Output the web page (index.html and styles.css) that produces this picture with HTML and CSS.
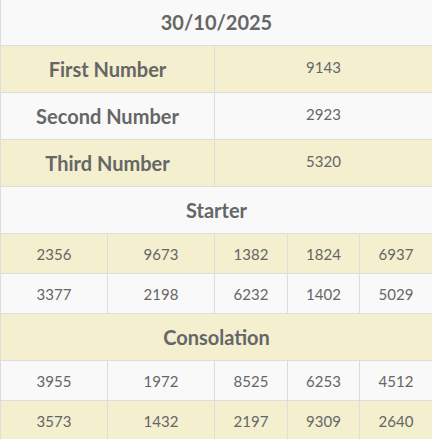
FILE: index.html
```html
<!DOCTYPE html>
<html>
<head>
<meta charset="utf-8">
<link rel="stylesheet" href="styles.css">
</head>
<body>
<div class="results">
  <div class="cell head span5 bg-grey">30/10/2025</div>

  <div class="cell label span2 bg-beige">First Number</div>
  <div class="cell prize span3 bg-beige">9143</div>

  <div class="cell label span2 bg-grey">Second Number</div>
  <div class="cell prize span3 bg-grey">2923</div>

  <div class="cell label span2 bg-beige">Third Number</div>
  <div class="cell prize span3 bg-beige">5320</div>

  <div class="cell head span5 bg-grey">Starter</div>

  <div class="cell num bg-beige">2356</div>
  <div class="cell num bg-beige">9673</div>
  <div class="cell num bg-beige">1382</div>
  <div class="cell num bg-beige">1824</div>
  <div class="cell num bg-beige">6937</div>

  <div class="cell num bg-grey">3377</div>
  <div class="cell num bg-grey">2198</div>
  <div class="cell num bg-grey">6232</div>
  <div class="cell num bg-grey">1402</div>
  <div class="cell num bg-grey">5029</div>

  <div class="cell head span5 bg-beige">Consolation</div>

  <div class="cell num bg-grey">3955</div>
  <div class="cell num bg-grey">1972</div>
  <div class="cell num bg-grey">8525</div>
  <div class="cell num bg-grey">6253</div>
  <div class="cell num bg-grey">4512</div>

  <div class="cell num bg-beige">3573</div>
  <div class="cell num bg-beige">1432</div>
  <div class="cell num bg-beige">2197</div>
  <div class="cell num bg-beige">9309</div>
  <div class="cell num bg-beige">2640</div>
</div>
</body>
</html>
```
FILE: styles.css
```css
html, body {
  margin: 0;
  padding: 0;
  background: #ffffff;
  overflow: hidden;
}

body {
  font-family: Lato, "Open Sans", sans-serif;
  color: #666666;
}

.results {
  display: grid;
  grid-template-columns: 107px 107px 73px 72px 73px;
  width: 432px;
  margin-top: -2px;
  border-top: 1px solid #dddddd;
}

.cell {
  box-sizing: border-box;
  border-left: 1px solid #dddddd;
  border-bottom: 1px solid #dddddd;
  display: flex;
  align-items: center;
  justify-content: center;
}

.span2 { grid-column: span 2; }
.span3 { grid-column: span 3; }
.span5 { grid-column: span 5; }

.bg-grey { background: #f9f9f9; }
.bg-beige { background: #f3efcf; }

.head {
  height: 47px;
  font-size: 20px;
  font-weight: 700;
}

.label {
  height: 47px;
  font-size: 20px;
  font-weight: 700;
}

.prize {
  height: 47px;
  font-size: 15px;
  font-weight: 400;
  padding-bottom: 4px;
}

.num {
  height: 40px;
  font-size: 15px;
  font-weight: 400;
}
```
